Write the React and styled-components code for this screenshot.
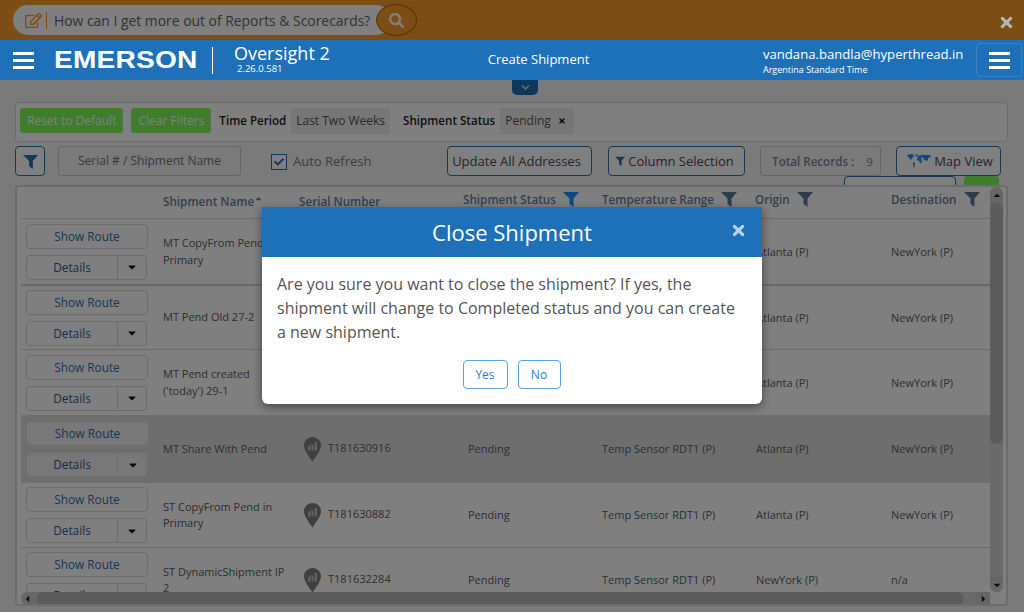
import styled, { createGlobalStyle } from 'styled-components'
import { FaSearch, FaRegEdit, FaTimes, FaCaretDown, FaCaretUp, FaChevronDown, FaCheck } from 'react-icons/fa'

const GlobalStyle = createGlobalStyle`
     html, body {
          margin: 0;
          overflow: hidden;
          background: #f4f4f4;
     }
     * {
          box-sizing: border-box;
     }
`
const BLUE = '#1e70b9'
const LINK = '#2f6fb0'
const TEXT = '#5c5c66'
const HEAD = '#6f7d9a'

const Page = styled.div`
     position: relative;
     width: 1024px;
     height: 612px;
     overflow: hidden;
     display: flex;
     flex-direction: column;
     font-family: 'Open Sans', sans-serif;
     color: ${TEXT};
`
const Overlay = styled.div`
     position: absolute;
     inset: 0;
     z-index: 10;
     background: rgba(0, 0, 0, 0.5);
     display: flex;
     justify-content: center;
     align-items: flex-start;
     padding-top: 207px;
`
const Banner = styled.div`
     position: relative;
     height: 40px;
     flex: none;
     background: #f89a28;
     padding: 5px 13px;
`
const AskPill = styled.div`
     position: relative;
     width: 378px;
     height: 30px;
     background: #fff;
     border-radius: 15px;
     display: flex;
     align-items: center;
     padding-left: 12px;
     font-size: 13.9px;
     color: #666;
     white-space: nowrap;
     & > svg {
          color: #f89a28;
          font-size: 17px;
          flex: none;
     }
`
const PillDivider = styled.span`
     width: 1px;
     height: 17px;
     background: #f89a28;
     margin: 0 7px 0 4px;
`
const AskButton = styled.div`
     position: absolute;
     left: 363px;
     top: -1px;
     width: 41px;
     height: 32px;
     border-radius: 50%;
     background: #f89a28;
     border: 1px solid #b06a14;
     display: flex;
     align-items: center;
     justify-content: center;
     color: #fff;
     font-size: 15px;
`
const BannerClose = styled.div`
     position: absolute;
     z-index: 20;
     right: 9px;
     top: 14px;
     color: #b5b5b5;
     font-size: 17px;
     line-height: 17px;
     & svg {
          display: block;
     }
`
const Header = styled.header`
     position: relative;
     z-index: 20;
     height: 40px;
     flex: none;
     background: ${BLUE};
     color: #fff;
     display: flex;
     align-items: center;
`
const Burger = styled.div`
     width: 21px;
     height: 17px;
     flex: none;
     display: flex;
     flex-direction: column;
     justify-content: space-between;
     & span {
          display: block;
          height: 3px;
          background: #fff;
     }
`
const MainBurger = styled(Burger)`
     margin: 1px 20px 0 13px;
`
const MenuButton = styled.div`
     position: absolute;
     right: 2px;
     top: 3px;
     width: 46px;
     height: 34px;
     border: 1px solid #3a84c8;
     border-radius: 4px;
     display: flex;
     align-items: center;
     justify-content: center;
`
const Logo = styled.div`
     position: relative;
     width: 143px;
     font-family: 'Liberation Sans', sans-serif;
     font-weight: 700;
     font-size: 24px;
     line-height: 24px;
     letter-spacing: 0.2px;
     transform: scaleX(1.17);
     transform-origin: left center;
     white-space: nowrap;
     flex: none;
`
const LogoDivider = styled.span`
     width: 1px;
     height: 27px;
     background: #fff;
     margin: 0 21px 0 15px;
     flex: none;
`
const Product = styled.div`
     width: 218px;
     flex: none;
`
const ProductName = styled.div`
     font-size: 18px;
     line-height: 20px;
     margin-top: -3px;
`
const ProductVersion = styled.div`
     font-size: 9.5px;
     line-height: 11px;
     margin-left: 3px;
`
const PageTitle = styled.div`
     font-size: 13px;
     width: 173px;
     margin-top: -2px;
     text-align: center;
     flex: none;
`
const User = styled.div`
     margin-left: 138px;
     display: flex;
     flex-direction: column;
`
const UserMail = styled.div`
     font-size: 13.1px;
     line-height: 18px;
`
const UserZone = styled.div`
     font-size: 9px;
     line-height: 13px;
`
const Drawer = styled.div`
     position: absolute;
     left: 512px;
     top: 80px;
     width: 26px;
     height: 15px;
     background: ${BLUE};
     border-radius: 0 0 5px 5px;
     color: #dfe9f4;
     font-size: 9px;
     display: flex;
     align-items: center;
     justify-content: center;
`
const Content = styled.main`
     flex: 1;
     min-height: 0;
     padding: 22px 16px 6px 15px;
     display: flex;
     flex-direction: column;
`
const FilterPanel = styled.div`
     height: 40px;
     flex: none;
     border: 1px solid #d5d8de;
     border-radius: 4px;
     background: #fff;
     display: flex;
     align-items: center;
     padding: 0 0 3px 4px;
     font-size: 12px;
`
const GreenButton = styled.div`
     height: 25px;
     padding: 0 7px;
     margin-right: 8px;
     border-radius: 3px;
     background: #7ef85c;
     color: #fff;
     font-size: 12px;
     display: flex;
     align-items: center;
     white-space: nowrap;
`
const FilterLabel = styled.div`
     color: #222;
     font-weight: 600;
     font-size: 11.6px;
     margin-left: ${({ $gap }) => $gap}px;
     white-space: nowrap;
`
const FilterChip = styled.div`
     height: 26px;
     margin-left: 5px;
     padding: 0 5px;
     background: #eee;
     color: #555;
     font-size: 12px;
     display: flex;
     align-items: center;
     gap: 7px;
     white-space: nowrap;
     & svg {
          font-size: 8px;
          color: #111;
          margin-right: 3px;
     }
`
const Toolbar = styled.div`
     height: 30px;
     flex: none;
     margin-top: 4px;
     display: flex;
     align-items: stretch;
`
const ToolButton = styled.div`
     margin-left: ${({ $gap }) => $gap || 0}px;
     width: ${({ $w }) => $w}px;
     padding-right: ${({ $pr }) => $pr || 0}px;
     padding-left: ${({ $pl }) => $pl || 0}px;
     border: 1px solid ${LINK};
     border-radius: 4px;
     background: #fff;
     color: #4a4a55;
     font-size: 13px;
     display: flex;
     align-items: center;
     justify-content: center;
     gap: 3px;
     white-space: nowrap;
     flex: none;
`
const SearchInput = styled.div`
     margin-left: 13px;
     width: 183px;
     padding-bottom: 2px;
     border: 1px solid #ccc;
     border-radius: 3px;
     color: #6a7488;
     font-size: 12px;
     display: flex;
     align-items: center;
     justify-content: center;
     white-space: nowrap;
`
const AutoRefresh = styled.div`
     margin-left: 30px;
     width: 176px;
     display: flex;
     align-items: center;
     gap: 6px;
     color: #777d8c;
     font-size: 13px;
`
const CheckBox = styled.span`
     width: 16px;
     height: 16px;
     margin-top: 2px;
     border: 1px solid ${LINK};
     background: #fff;
     color: ${LINK};
     font-size: 10px;
     display: flex;
     align-items: center;
     justify-content: center;
`
const TotalRecords = styled.div`
     margin-left: 15px;
     width: 121px;
     padding-left: 4px;
     border: 1px solid #ccc;
     border-radius: 3px;
     color: #7c8494;
     font-size: 11.6px;
     font-weight: 600;
     display: flex;
     align-items: center;
     justify-content: center;
     gap: 12px;
     white-space: nowrap;
     & span {
          font-weight: 400;
     }
`
const PeekRow = styled.div`
     height: 9px;
     flex: none;
     display: flex;
     justify-content: flex-end;
     gap: 8px;
     padding-right: 9px;
     overflow: hidden;
`
const PeekOutline = styled.div`
     width: 112px;
     height: 30px;
     border: 1px solid ${LINK};
     border-radius: 4px;
     background: #fff;
`
const PeekGreen = styled.div`
     width: 35px;
     height: 30px;
     border-radius: 4px;
     background: #7ef85c;
`
const GridPanel = styled.section`
     flex: 1;
     min-height: 0;
     border: 2px solid #d5d8de;
     border-radius: 4px;
     background: #fff;
     display: grid;
     grid-template-columns: 969px 13px;
     grid-template-rows: 405px 13px;
     padding-left: 4px;
     overflow: hidden;
`
const Table = styled.div`
     overflow: hidden;
`
const HeadRow = styled.div`
     height: 32px;
     display: grid;
     grid-template-columns: 142px 136px 164px 139px 153px 136px 1fr;
     border-bottom: 1px solid #d0d2d6;
`
const HeadCell = styled.div`
     display: flex;
     align-items: center;
     gap: 7px;
     padding-bottom: ${({ $up }) => ($up ? 8 : 4)}px;
     color: ${HEAD};
     font-size: 11.7px;
     font-weight: 600;
     white-space: nowrap;
`
const SortCaret = styled(FaCaretUp)`
     font-size: 9px;
     margin-left: -7px;
     margin-top: -4px;
`
const Row = styled.div`
     display: grid;
     grid-template-columns: 142px 141px 164px 134px 154px 135px 1fr;
     height: ${({ $h }) => $h}px;
     align-items: center;
     background: ${({ $active }) => ($active ? '#dcdcdc' : '#fff')};
     border-bottom: ${({ $line }) => $line}px solid #d0d2d6;
`
const Actions = styled.div`
     display: flex;
     flex-direction: column;
     gap: ${({ $active }) => ($active ? 8 : 6)}px;
     padding-left: ${({ $active }) => ($active ? 6 : 5)}px;
     width: 127px;
`
const ShowRoute = styled.div`
     height: ${({ $active }) => ($active ? 23 : 25)}px;
     border: ${({ $active }) => ($active ? 'none' : '1px solid #d5d8de')};
     background: ${({ $active }) => ($active ? '#f0f0f0' : '#fff')};
     border-radius: 4px;
     color: ${LINK};
     font-size: 11.8px;
     padding-bottom: 1px;
     display: flex;
     align-items: center;
     justify-content: center;
`
const DetailsGroup = styled.div`
     height: ${({ $active }) => ($active ? 23 : 25)}px;
     margin-right: 1px;
     border: ${({ $active }) => ($active ? 'none' : '1px solid #d5d8de')};
     background: ${({ $active }) => ($active ? '#f0f0f0' : '#fff')};
     border-radius: 4px;
     display: flex;
`
const DetailsLabel = styled.div`
     width: 91px;
     color: #2c5aa0;
     font-size: 11.8px;
     padding-bottom: 1px;
     display: flex;
     align-items: center;
     justify-content: center;
     border-right: 1px solid #d5d8de;
`
const DetailsCaret = styled.div`
     flex: 1;
     color: #111;
     font-size: 12px;
     display: flex;
     align-items: center;
     justify-content: center;
`
const Cell = styled.div`
     font-size: 11px;
     line-height: 16.5px;
     padding-right: 14px;
     margin-top: 1px;
     white-space: nowrap;
`
const NameCell = styled(Cell)`
     white-space: normal;
     margin-top: 0;
`
const SerialCell = styled(Cell)`
     display: flex;
     align-items: center;
     gap: 7px;
     margin-top: 0;
     & svg {
          flex: none;
     }
     & span {
          margin-top: -2px;
     }
`
const VScroll = styled.div`
     background: #d4d4d4;
     border-radius: 7px;
     display: flex;
     flex-direction: column;
     justify-content: space-between;
     position: relative;
     overflow: hidden;
`
const ScrollEnd = styled.div`
     position: relative;
     height: 15px;
     background: #cccccc;
     color: #222;
     font-size: 10px;
     display: flex;
     align-items: center;
     justify-content: center;
`
const VThumb = styled.div`
     position: absolute;
     left: 0;
     right: 0;
     top: 15px;
     height: 242px;
     background: #b8b8b8;
     border-radius: 7px;
`
const HScroll = styled.div`
     background: #d4d4d4;
     border-radius: 7px 0 0 7px;
     display: flex;
     justify-content: space-between;
     position: relative;
     overflow: hidden;
`
const HEnd = styled(ScrollEnd)`
     height: auto;
     width: 14px;
`
const HThumb = styled.div`
     position: absolute;
     top: 0;
     bottom: 0;
     left: 15px;
     width: 928px;
     background: #b8b8b8;
     border-radius: 7px;
`
const Modal = styled.div`
     width: 500px;
     height: 197px;
     background: #fff;
     border-radius: 0 0 6px 6px;
     box-shadow: 0 3px 10px rgba(0, 0, 0, 0.45);
     overflow: hidden;
     font-family: 'Open Sans', sans-serif;
`
const ModalHeader = styled.div`
     position: relative;
     height: 50px;
     background: ${BLUE};
     color: #fff;
     font-size: 22px;
     display: flex;
     align-items: center;
     justify-content: center;
`
const ModalClose = styled.div`
     position: absolute;
     right: 15px;
     top: 15px;
     color: #b9d3ea;
     font-size: 17px;
     line-height: 17px;
     & svg {
          display: block;
     }
`
const ModalBody = styled.div`
     padding: 15px 20px 0 15px;
     color: #555;
     font-size: 16px;
     line-height: 24px;
`
const ModalActions = styled.div`
     margin-top: 16px;
     display: flex;
     justify-content: center;
     gap: 10px;
     padding-left: 4px;
`
const ModalButton = styled.div`
     width: ${({ $w }) => $w}px;
     height: 29px;
     border: 1px solid #5aa2e0;
     border-radius: 4px;
     color: #2f7fcc;
     font-size: 12px;
     display: flex;
     align-items: center;
     justify-content: center;
`

const Funnel = ({ size = 16, color = '#5f7497' }) => (
     <svg width={size} height={size} viewBox="0 0 16 16" fill={color}>
          <path d="M0 1h16l-5.5 6.5V16L6.5 13V7.5z" />
     </svg>
)

const WorldMap = () => (
     <svg width="24" height="14" viewBox="0 0 24 14" fill="#2a90e8">
          <path d="M0 1l5-1 2 1-1 2-1 1-1 2-2-2zM6 8l2 1-1 5-1-2zM8 1l3-1-1 3zM11 2l4-1 1 2-2 1 1 3-1 3-2-3-2-1zM15 1l8 0 1 2-3 1 0 3-2-1-1 1-2-3z" />
     </svg>
)

const SensorPin = () => (
     <svg width="17" height="25" viewBox="0 0 17 25">
          <path d="M8.5 0C3.8 0 0 3.7 0 8.3c0 5 5 11 8.5 16.2C12 19.3 17 13.3 17 8.3 17 3.7 13.2 0 8.5 0z" fill="#7e7e7e" />
          <path d="M4 9.5l2.5-2v6H4zM7.5 6.5l2 2v5h-2zM10.5 5h2.5v8.5h-2.5z" fill="#c4c4c4" />
     </svg>
)

const rows = [
     { name: 'MT CopyFrom Pend in Primary', serial: 'T181630901', status: 'Pending', temp: 'Temp Sensor RDT1 (P)', origin: 'Atlanta (P)', dest: 'NewYork (P)', h: 67, line: 2 },
     { name: 'MT Pend Old 27-2', serial: 'T181630902', status: 'Pending', temp: 'Temp Sensor RDT1 (P)', origin: 'Atlanta (P)', dest: 'NewYork (P)', h: 64, line: 1 },
     { name: "MT Pend created ('today') 29-1", serial: 'T181630903', status: 'Pending', temp: 'Temp Sensor RDT1 (P)', origin: 'Atlanta (P)', dest: 'NewYork (P)', h: 65, line: 0 },
     { name: 'MT Share With Pend', serial: 'T181630916', status: 'Pending', temp: 'Temp Sensor RDT1 (P)', origin: 'Atlanta (P)', dest: 'NewYork (P)', h: 68, line: 0, active: true },
     { name: 'ST CopyFrom Pend in Primary', serial: 'T181630882', status: 'Pending', temp: 'Temp Sensor RDT1 (P)', origin: 'Atlanta (P)', dest: 'NewYork (P)', h: 65, line: 1 },
     { name: 'ST DynamicShipment IP 2', serial: 'T181632284', status: 'Pending', temp: 'Temp Sensor RDT1 (P)', origin: 'NewYork (P)', dest: 'n/a', h: 65, line: 1 },
]

function App() {
     return (
          <Page>
               <GlobalStyle />
               <Banner>
                    <AskPill>
                         <FaRegEdit />
                         <PillDivider />
                         How can I get more out of Reports &amp; Scorecards?
                         <AskButton>
                              <FaSearch />
                         </AskButton>
                    </AskPill>
                    <BannerClose>
                         <FaTimes />
                    </BannerClose>
               </Banner>
               <Header>
                    <MainBurger>
                         <span />
                         <span />
                         <span />
                    </MainBurger>
                    <Logo>EMERSON</Logo>
                    <LogoDivider />
                    <Product>
                         <ProductName>Oversight 2</ProductName>
                         <ProductVersion>2.26.0.581</ProductVersion>
                    </Product>
                    <PageTitle>Create Shipment</PageTitle>
                    <User>
                         <UserMail>vandana.bandla@hyperthread.in</UserMail>
                         <UserZone>Argentina Standard Time</UserZone>
                    </User>
                    <MenuButton>
                         <Burger>
                              <span />
                              <span />
                              <span />
                         </Burger>
                    </MenuButton>
               </Header>
               <Drawer>
                    <FaChevronDown />
               </Drawer>
               <Content>
                    <FilterPanel>
                         <GreenButton>Reset to Default</GreenButton>
                         <GreenButton>Clear Filters</GreenButton>
                         <FilterLabel>Time Period</FilterLabel>
                         <FilterChip>Last Two Weeks</FilterChip>
                         <FilterLabel $gap={13}>Shipment Status</FilterLabel>
                         <FilterChip>
                              Pending
                              <FaTimes />
                         </FilterChip>
                    </FilterPanel>
                    <Toolbar>
                         <ToolButton $w={30}>
                              <Funnel size={15} color={LINK} />
                         </ToolButton>
                         <SearchInput>Serial # / Shipment Name</SearchInput>
                         <AutoRefresh>
                              <CheckBox>
                                   <FaCheck />
                              </CheckBox>
                              Auto Refresh
                         </AutoRefresh>
                         <ToolButton $w={145} $pr={6}>Update All Addresses</ToolButton>
                         <ToolButton $w={137} $gap={16} $pr={4}>
                              <Funnel size={10} color={LINK} />
                              Column Selection
                         </ToolButton>
                         <TotalRecords>
                              Total Records :<span>9</span>
                         </TotalRecords>
                         <ToolButton $w={105} $gap={15} $pl={3}>
                              <WorldMap />
                              Map View
                         </ToolButton>
                    </Toolbar>
                    <PeekRow>
                         <PeekOutline />
                         <PeekGreen />
                    </PeekRow>
                    <GridPanel>
                         <Table>
                              <HeadRow>
                                   <HeadCell />
                                   <HeadCell>
                                        Shipment Name
                                        <SortCaret />
                                   </HeadCell>
                                   <HeadCell>Serial Number</HeadCell>
                                   <HeadCell $up>
                                        Shipment Status
                                        <Funnel size={16} color="#1490ff" />
                                   </HeadCell>
                                   <HeadCell $up>
                                        Temperature Range
                                        <Funnel />
                                   </HeadCell>
                                   <HeadCell $up>
                                        Origin
                                        <Funnel />
                                   </HeadCell>
                                   <HeadCell $up>
                                        Destination
                                        <Funnel />
                                   </HeadCell>
                              </HeadRow>
                              {rows.map((row) => (
                                   <Row key={row.serial} $h={row.h} $line={row.line} $active={row.active}>
                                        <Actions $active={row.active}>
                                             <ShowRoute $active={row.active}>Show Route</ShowRoute>
                                             <DetailsGroup $active={row.active}>
                                                  <DetailsLabel>Details</DetailsLabel>
                                                  <DetailsCaret>
                                                       <FaCaretDown />
                                                  </DetailsCaret>
                                             </DetailsGroup>
                                        </Actions>
                                        <NameCell>{row.name}</NameCell>
                                        <SerialCell>
                                             <SensorPin />
                                             <span>{row.serial}</span>
                                        </SerialCell>
                                        <Cell>{row.status}</Cell>
                                        <Cell>{row.temp}</Cell>
                                        <Cell>{row.origin}</Cell>
                                        <Cell>{row.dest}</Cell>
                                   </Row>
                              ))}
                         </Table>
                         <VScroll>
                              <VThumb />
                              <ScrollEnd>
                                   <FaCaretUp />
                              </ScrollEnd>
                              <ScrollEnd>
                                   <FaCaretDown />
                              </ScrollEnd>
                         </VScroll>
                         <HScroll>
                              <HThumb />
                              <HEnd>
                                   <FaCaretDown style={{ transform: 'rotate(90deg)' }} />
                              </HEnd>
                              <HEnd>
                                   <FaCaretDown style={{ transform: 'rotate(-90deg)' }} />
                              </HEnd>
                         </HScroll>
                    </GridPanel>
               </Content>
               <Overlay>
                    <Modal>
                         <ModalHeader>
                              Close Shipment
                              <ModalClose>
                                   <FaTimes />
                              </ModalClose>
                         </ModalHeader>
                         <ModalBody>
                              Are you sure you want to close the shipment? If yes, the shipment will change to Completed status and you can create a new shipment.
                              <ModalActions>
                                   <ModalButton $w={45}>Yes</ModalButton>
                                   <ModalButton $w={43}>No</ModalButton>
                              </ModalActions>
                         </ModalBody>
                    </Modal>
               </Overlay>
          </Page>
     )
}
export default App
